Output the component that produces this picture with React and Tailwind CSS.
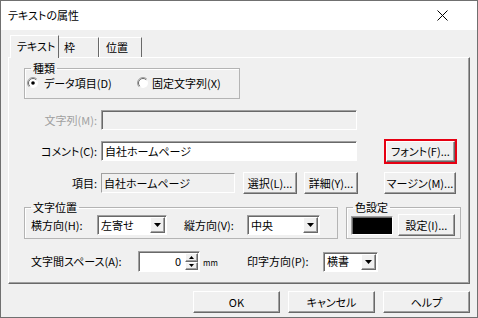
import React from "react";

// classic win32 bevels
const sunken =
  "border border-t-[#a0a0a0] border-l-[#a0a0a0] border-b-white border-r-white shadow-[inset_1px_1px_0_#696969]";
const raised =
  "border border-t-white border-l-white border-r-[#696969] border-b-[#696969] shadow-[inset_-1px_-1px_0_#a0a0a0] bg-[#f0f0f0]";
const group = "border border-[#b4b4b4] shadow-[inset_1px_1px_0_#ffffff]";

function Btn({ className = "", children }) {
  return (
    <div className={`${raised} flex items-center justify-center ${className}`}>
      {children}
    </div>
  );
}

function Arrow() {
  return (
    <svg width="7" height="4" viewBox="0 0 7 4">
      <path d="M0 0 H7 L3.5 4 Z" fill="#000" />
    </svg>
  );
}

function Combo({ value, className = "" }) {
  return (
    <div className={`${sunken} bg-white h-[20px] flex items-stretch py-[1px] pr-[1px] ${className}`}>
      <span className="flex-1 pl-[3px] flex items-center">{value}</span>
      <div className={`${raised} w-[15px] flex items-center justify-center`}>
        <Arrow />
      </div>
    </div>
  );
}

function Radio({ checked }) {
  return (
    <svg width="12" height="12" viewBox="0 0 12 12" className="shrink-0">
      <circle cx="6" cy="6" r="5" fill="#fff" />
      <path d="M2.1 9.9 A5.5 5.5 0 0 1 9.9 2.1" stroke="#a0a0a0" fill="none" />
      <path d="M2.8 9.2 A4.5 4.5 0 0 1 9.2 2.8" stroke="#696969" fill="none" />
      {checked && <circle cx="6" cy="6" r="1.8" fill="#000" />}
    </svg>
  );
}

function Legend({ children }) {
  return <legend className="ml-[6px] px-[2px] leading-[13px]">{children}</legend>;
}

export default function App() {
  return (
    <div className="w-[478px] h-[318px] border border-[#707070] bg-[#f0f0f0] flex flex-col text-[11px] leading-[13px] text-black font-['Noto_Sans_CJK_JP',sans-serif] [font-feature-settings:'palt'] overflow-hidden">
      {/* title bar */}
      <div className="h-[29px] shrink-0 bg-white flex items-center justify-between pl-[7px] pr-[29px]">
        <span className="text-[11px]">テキストの属性</span>
        <svg width="11" height="11" viewBox="0 0 11 11">
          <path d="M0.5 0.5 L10.5 10.5 M10.5 0.5 L0.5 10.5" stroke="#000" strokeWidth="1" />
        </svg>
      </div>

      <div className="flex-1 px-[7px]">
        {/* tabs */}
        <div className="h-[27px] flex items-end">
          <div className="relative z-10 ml-[2px] -mb-[1px] w-[49px] h-[23px] bg-[#f0f0f0] border-t border-l border-r border-t-white border-l-white border-r-[#696969] pl-[6px] pt-[4px]">
            テキスト
          </div>
          <div className="w-[40px] h-[20px] border-t border-r border-t-white border-r-[#696969] pl-[5px] pt-[3px]">
            枠
          </div>
          <div className="w-[43px] h-[20px] border-t border-l border-r border-t-white border-l-white border-r-[#696969] pl-[6px] pt-[3px]">
            位置
          </div>
        </div>

        {/* tab panel */}
        <div className={`${raised} w-[462px] h-[227px] flex flex-col`}>
          <fieldset className={`${group} ml-[15px] mt-[4px] w-[216px] pb-[7px]`}>
            <Legend>種類</Legend>
            <div className="h-[16px] flex items-center pl-[2px]">
              <div className="w-[110px] flex items-center gap-[5px]">
                <Radio checked />
                <span>データ項目(D)</span>
              </div>
              <div className="flex items-center gap-[3px]">
                <Radio />
                <span>固定文字列(X)</span>
              </div>
            </div>
          </fieldset>

          {/* 文字列 */}
          <div className="mt-[11px] h-[20px] flex items-center">
            <span className="w-[88px] text-right text-[#a0a0a0]">文字列(M):</span>
            <div className={`${sunken} ml-[4px] w-[256px] h-[20px] bg-[#f0f0f0]`} />
          </div>

          {/* コメント */}
          <div className="mt-[8px] h-[26px] flex items-center">
            <span className="w-[88px] text-right">コメント(C):</span>
            <div className={`${sunken} ml-[4px] w-[256px] h-[20px] bg-white pl-[3px] flex items-center`}>
              自社ホームページ
            </div>
            <div className="ml-[27px] w-[73px] h-[25px] border-2 border-[#e60012] flex">
              <Btn className="flex-1">フォント(F)...</Btn>
            </div>
          </div>

          {/* 項目 */}
          <div className="mt-[8px] h-[22px] flex items-center">
            <span className="w-[88px] text-right">項目:</span>
            <div className="ml-[4px] w-[134px] h-[20px] border border-t-[#a0a0a0] border-l-[#a0a0a0] border-b-white border-r-white pl-[2px] flex items-center">
              自社ホームページ
            </div>
            <Btn className="ml-[8px] w-[54px] h-[22px]">選択(L)...</Btn>
            <Btn className="ml-[7px] w-[54px] h-[22px]">詳細(Y)...</Btn>
            <Btn className="ml-[26px] w-[72px] h-[22px]">マージン(M)...</Btn>
          </div>

          {/* 文字位置 / 色設定 */}
          <div className="mt-[7px] flex items-start">
            <fieldset className={`${group} ml-[15px] w-[314px] pb-[2px]`}>
              <Legend>文字位置</Legend>
              <div className="h-[22px] flex items-center pl-[6px]">
                <span className="w-[66px]">横方向(H):</span>
                <Combo value="左寄せ" className="w-[70px]" />
                <span className="ml-[17px] w-[63px]">縦方向(V):</span>
                <Combo value="中央" className="w-[73px]" />
              </div>
            </fieldset>
            <fieldset className={`${group} ml-[8px] w-[115px] pb-[2px]`}>
              <Legend>色設定</Legend>
              <div className="h-[22px] flex items-center pl-[4px]">
                <div className={`${sunken} w-[42px] h-[19px] bg-black`} />
                <Btn className="ml-[5px] w-[57px] h-[22px]">設定(I)...</Btn>
              </div>
            </fieldset>
          </div>

          {/* 文字間スペース / 印字方向 */}
          <div className="mt-[12px] h-[21px] flex items-center">
            <span className="ml-[22px] w-[107px]">文字間スペース(A):</span>
            <div className={`${sunken} w-[62px] h-[21px] bg-white flex items-stretch py-[1px] pr-[1px]`}>
              <span className="flex-1 text-right pr-[4px] flex items-center justify-end">0</span>
              <div className="w-[13px] flex flex-col">
                <div className={`${raised} flex-1 flex items-center justify-center`}>
                  <svg width="5" height="3" viewBox="0 0 5 3">
                    <path d="M0 3 H5 L2.5 0 Z" fill="#000" />
                  </svg>
                </div>
                <div className={`${raised} flex-1 flex items-center justify-center`}>
                  <svg width="5" height="3" viewBox="0 0 5 3">
                    <path d="M0 0 H5 L2.5 3 Z" fill="#000" />
                  </svg>
                </div>
              </div>
            </div>
            <span className="w-[47px] pl-[3px] pt-[3px] text-[8px] leading-[8px]">mm</span>
            <span className="w-[76px]">印字方向(P):</span>
            <Combo value="横書" className="w-[55px]" />
          </div>
        </div>

        {/* dialog buttons */}
        <div className="mt-[7px] flex justify-end gap-[8px]">
          <Btn className="w-[87px] h-[22px]">OK</Btn>
          <Btn className="w-[87px] h-[22px]">キャンセル</Btn>
          <Btn className="w-[87px] h-[22px]">ヘルプ</Btn>
        </div>
      </div>
    </div>
  );
}
